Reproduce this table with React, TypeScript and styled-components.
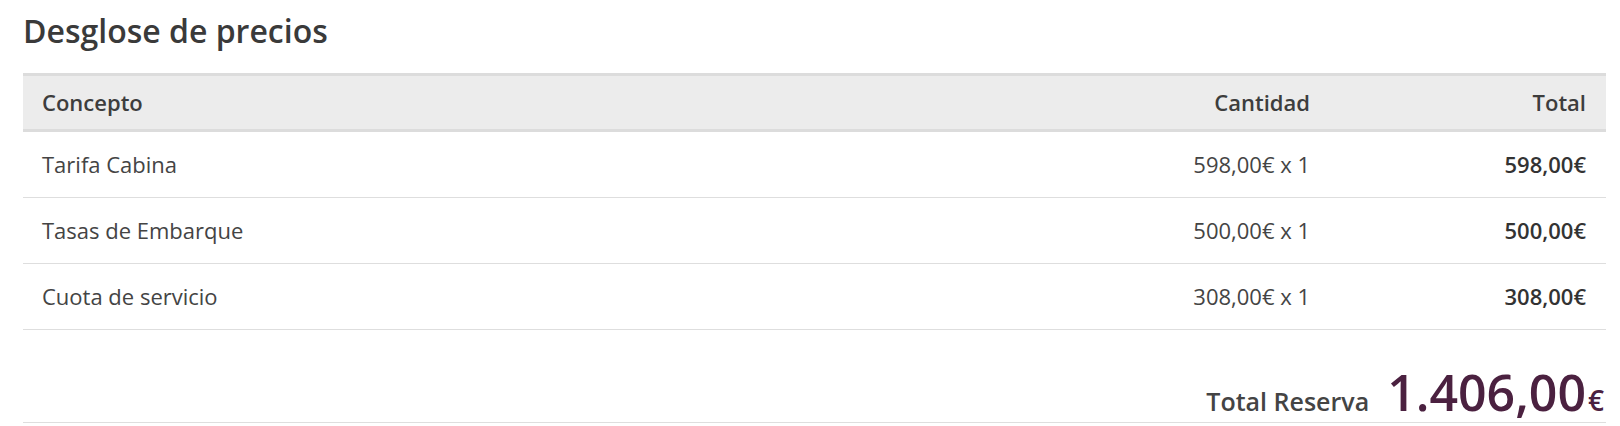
import * as React from "react";
import styled, { createGlobalStyle } from "styled-components";

const GlobalStyle = createGlobalStyle`
  body {
    margin: 0;
    background: #fff;
    font-family: "Open Sans", "Liberation Sans", sans-serif;
    color: #444;
  }
`;

const Page = styled.div`
  padding: 9px 14px 0 23px;
`;

const Title = styled.h2`
  margin: 0 0 21px;
  font-size: 32px;
  font-weight: 600;
  line-height: normal;
  color: #3a3a3a;
`;

const Table = styled.div`
  display: grid;
  grid-template-columns: 1fr 300px 276px;
`;

const HeadCell = styled.div<{ $right?: boolean }>`
  padding: 10px 20px 10px 19px;
  font-size: 22px;
  font-weight: 600;
  line-height: 33px;
  color: #3d3d3d;
  background: #ececec;
  border-top: 3px solid #dcdcdc;
  border-bottom: 3px solid #dcdcdc;
  text-align: ${(p) => (p.$right ? "right" : "left")};
`;

const Cell = styled.div<{ $right?: boolean; $strong?: boolean }>`
  padding: 16px 20px 16px 19px;
  font-size: 22px;
  font-weight: ${(p) => (p.$strong ? 600 : 400)};
  line-height: 33px;
  color: ${(p) => (p.$strong ? "#333" : "#444")};
  border-bottom: 1px solid #dedede;
  text-align: ${(p) => (p.$right ? "right" : "left")};
`;

const TotalBar = styled.div`
  display: flex;
  justify-content: flex-end;
  align-items: baseline;
  gap: 18px;
  padding: 32px 2px 0 0;
  border-bottom: 1px solid #dedede;
`;

const TotalLabel = styled.span`
  font-size: 25px;
  font-weight: 600;
  line-height: 34px;
  color: #444;
`;

const TotalAmount = styled.span`
  font-size: 50px;
  font-weight: 600;
  line-height: 60px;
  color: #4b2140;
`;

const Euro = styled.span`
  margin-left: 2px;
  font-size: 28px;
  line-height: 1;
`;

const rows = [
  { concepto: "Tarifa Cabina", cantidad: "598,00€ x 1", total: "598,00€" },
  { concepto: "Tasas de Embarque", cantidad: "500,00€ x 1", total: "500,00€" },
  { concepto: "Cuota de servicio", cantidad: "308,00€ x 1", total: "308,00€" },
];

export default function App() {
  return (
    <>
      <GlobalStyle />
      <Page>
        <Title>Desglose de precios</Title>
        <Table>
          <HeadCell>Concepto</HeadCell>
          <HeadCell $right>Cantidad</HeadCell>
          <HeadCell $right>Total</HeadCell>
          {rows.map((r) => (
            <React.Fragment key={r.concepto}>
              <Cell>{r.concepto}</Cell>
              <Cell $right>{r.cantidad}</Cell>
              <Cell $right $strong>{r.total}</Cell>
            </React.Fragment>
          ))}
        </Table>
        <TotalBar>
          <TotalLabel>Total Reserva</TotalLabel>
          <TotalAmount>
            1.406,00<Euro>€</Euro>
          </TotalAmount>
        </TotalBar>
      </Page>
    </>
  );
}
